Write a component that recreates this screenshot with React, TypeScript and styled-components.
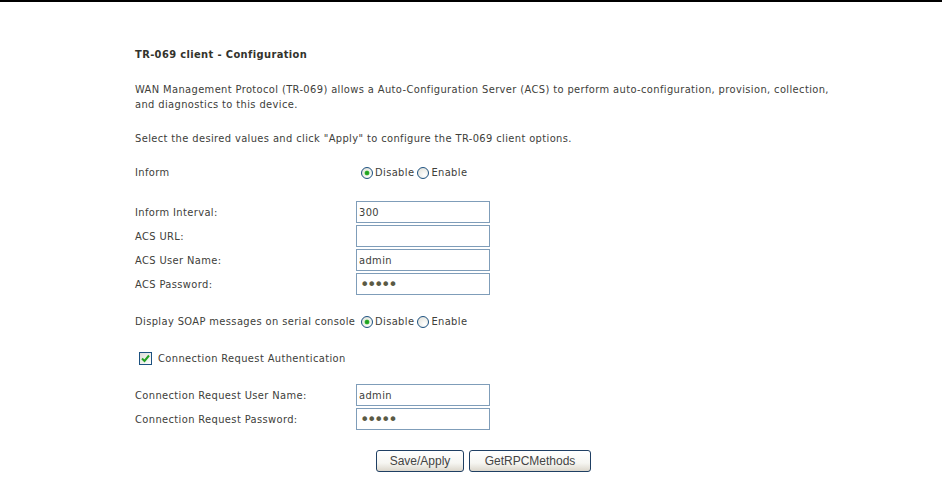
import React from "react";
import styled, { createGlobalStyle } from "styled-components";

const Global = createGlobalStyle`
  html, body { margin: 0; padding: 0; background: #ffffff; }
  body { font-family: "DejaVu Sans", Tahoma, sans-serif; font-size: 11px; color: #40403a; }
`;

const TopRule = styled.div`
  height: 2px;
  background: #000;
`;

const Content = styled.div`
  padding: 45px 0 0 135px;
  font-family: "DejaVu Sans Condensed", "DejaVu Sans", sans-serif;
  font-stretch: condensed;
  font-size: 11px;
  letter-spacing: 0.38px;
  line-height: 15px;
`;

const Title = styled.div`
  font-weight: bold;
  margin-bottom: 20px;
  color: #33332c;
`;

const Para = styled.p<{ $gap?: number }>`
  margin: 0 0 ${(p) => p.$gap ?? 19}px 0;
  width: 760px;
`;

const FieldGrid = styled.div<{ $top?: number }>`
  display: grid;
  grid-template-columns: 221px 134px;
  row-gap: 2px;
  align-items: center;
  margin-top: ${(p) => p.$top ?? 0}px;
`;

const Row = styled.div<{ $top?: number }>`
  display: flex;
  align-items: center;
  margin-top: ${(p) => p.$top ?? 0}px;
`;

const Label = styled.span<{ $w?: number }>`
  display: inline-block;
  width: ${(p) => (p.$w ? `${p.$w}px` : "auto")};
`;

const TextBox = styled.input`
  box-sizing: border-box;
  width: 134px;
  height: 22px;
  border: 1px solid #7f9db9;
  padding: 0 2px;
  margin: 0;
  font-family: "DejaVu Sans Condensed", "DejaVu Sans", sans-serif;
  font-stretch: condensed;
  font-size: 11px;
  letter-spacing: 0.38px;
  color: #40403a;
  background: #fff;
  outline: none;
  &[type="password"] {
    font-family: "DejaVu Sans", sans-serif;
    font-stretch: normal;
    letter-spacing: -2.4px;
    color: #5a5a44;
    font-size: 16px;
    padding-left: 3px;
  }
`;

const RadioWrap = styled.label`
  display: inline-flex;
  align-items: center;
  margin-right: 3px;
`;

const RadioCircle = styled.span<{ $on?: boolean }>`
  box-sizing: border-box;
  width: 12px;
  height: 12px;
  border-radius: 50%;
  border: 1px solid #1c5180;
  background: radial-gradient(circle at 65% 70%, #ffffff 0%, #e8e8e2 70%, #d2d2c8 100%);
  display: inline-flex;
  align-items: center;
  justify-content: center;
  margin-right: 2px;
  &::after {
    content: "";
    width: 4px;
    height: 4px;
    border-radius: 50%;
    background: ${(p) => (p.$on ? "#21a121" : "transparent")};
    box-shadow: ${(p) => (p.$on ? "0 0 0 0.5px #5fd05f" : "none")};
  }
`;

const CheckBox = styled.span`
  box-sizing: border-box;
  width: 13px;
  height: 13px;
  border: 1px solid #1c5180;
  background: linear-gradient(135deg, #dcdcd7 0%, #ffffff 100%);
  display: inline-flex;
  align-items: center;
  justify-content: center;
  margin: 0 6px 0 4px;
`;

const Buttons = styled.div`
  display: flex;
  gap: 5px;
  margin: 20px 0 0 241px;
`;

const Button = styled.button<{ $w: number }>`
  box-sizing: border-box;
  width: ${(p) => p.$w}px;
  height: 22px;
  border: 1px solid #1f3f63;
  border-radius: 3px;
  background: linear-gradient(#ffffff 0%, #f6f6f2 60%, #dcd7cc 100%);
  font-family: "Liberation Sans", Arial, sans-serif;
  font-size: 12px;
  color: #444444;
  padding: 0;
`;

function Radio({ on, label }: { on?: boolean; label: string }) {
  return (
    <RadioWrap>
      <RadioCircle $on={on} />
      {label}
    </RadioWrap>
  );
}

export default function App() {
  return (
    <>
      <Global />
      <TopRule />
      <Content>
        <Title>TR-069 client - Configuration</Title>
        <Para>
          WAN Management Protocol (TR-069) allows a Auto-Configuration Server (ACS) to perform auto-configuration, provision, collection,
          <br />
          and diagnostics to this device.
        </Para>
        <Para>Select the desired values and click "Apply" to configure the TR-069 client options.</Para>
        <Row>
          <Label $w={226}>Inform</Label>
          <Radio on label="Disable" />
          <Radio label="Enable" />
        </Row>
        <FieldGrid $top={21}>
          <Label>Inform Interval:</Label>
          <TextBox readOnly value="300" />
          <Label>ACS URL:</Label>
          <TextBox readOnly value="" />
          <Label>ACS User Name:</Label>
          <TextBox readOnly value="admin" />
          <Label>ACS Password:</Label>
          <TextBox readOnly type="password" value="admin" />
        </FieldGrid>
        <Row $top={19}>
          <Label $w={226}>Display SOAP messages on serial console</Label>
          <Radio on label="Disable" />
          <Radio label="Enable" />
        </Row>
        <Row $top={22}>
          <CheckBox>
            <svg width="9" height="9" viewBox="0 0 9 9">
              <path d="M1 4.5 L3.5 7 L8 1.5" fill="none" stroke="#21a121" strokeWidth="2" />
            </svg>
          </CheckBox>
          Connection Request Authentication
        </Row>
        <FieldGrid $top={18}>
          <Label>Connection Request User Name:</Label>
          <TextBox readOnly value="admin" />
          <Label>Connection Request Password:</Label>
          <TextBox readOnly type="password" value="admin" />
        </FieldGrid>
        <Buttons>
          <Button $w={88}>Save/Apply</Button>
          <Button $w={122}>GetRPCMethods</Button>
        </Buttons>
      </Content>
    </>
  );
}
